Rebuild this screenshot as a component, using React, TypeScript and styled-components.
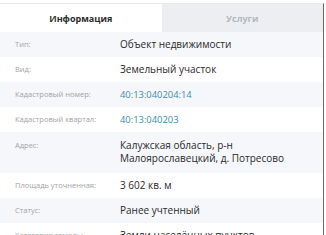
import React from "react";
import styled, { createGlobalStyle } from "styled-components";

const Global = createGlobalStyle`
  html, body { margin: 0; padding: 0; background: #ffffff; }
  body { font-family: "Open Sans", "Noto Sans", sans-serif; }
`;

const Frame = styled.div`
  width: 326px;
  height: 235px;
  overflow: hidden;
  background: #ffffff;
  padding-top: 3px;
  box-sizing: border-box;
`;

const Panel = styled.div`
  width: 324px;
  box-sizing: border-box;
  border-top: 1px solid #e6e8ec;
  border-right: 1px solid #6a6a6a;
`;

const Tabs = styled.div`
  display: flex;
  height: 28px;
`;

const Tab = styled.div<{ $active?: boolean }>`
  flex: 1;
  display: flex;
  align-items: center;
  justify-content: center;
  font-family: "Open Sans", sans-serif;
  font-weight: 700;
  font-size: 9px;
  color: ${(p) => (p.$active ? "#2b2b2b" : "#b4b8c0")};
  background: ${(p) => (p.$active ? "#ffffff" : "#eceef2")};
`;

const Row = styled.div<{ $alt?: boolean; $tall?: boolean }>`
  display: grid;
  grid-template-columns: 105px 1fr;
  align-items: ${(p) => (p.$tall ? "start" : "center")};
  padding: ${(p) => (p.$tall ? "7px 0 8px 15px" : "0 0 0 15px")};
  min-height: 25px;
  box-sizing: border-box;
  background: ${(p) => (p.$alt ? "#f5f7fa" : "#ffffff")};
`;

const Label = styled.div`
  font-size: 7.5px;
  color: #a3a3a3;
  line-height: 13px;
`;

const Value = styled.div<{ $link?: boolean }>`
  font-size: ${(p) => (p.$link ? "9.4px" : "10px")};
  color: ${(p) => (p.$link ? "#3e8ea8" : "#2a2a2a")};
  line-height: 13px;
`;

const rows: { label: string; value: string; link?: boolean; tall?: boolean }[] = [
  { label: "Тип:", value: "Объект недвижимости" },
  { label: "Вид:", value: "Земельный участок" },
  { label: "Кадастровый номер:", value: "40:13:040204:14", link: true },
  { label: "Кадастровый квартал:", value: "40:13:040203", link: true },
  { label: "Адрес:", value: "Калужская область, р-н Малоярославецкий, д. Потресово", tall: true },
  { label: "Площадь уточненная:", value: "3 602 кв. м" },
  { label: "Статус:", value: "Ранее учтенный" },
  { label: "Категория земель:", value: "Земли населённых пунктов" },
];

export default function App() {
  return (
    <>
      <Global />
      <Frame>
        <Panel>
          <Tabs>
            <Tab $active>Информация</Tab>
            <Tab>Услуги</Tab>
          </Tabs>
          {rows.map((r, i) => (
            <Row key={r.label} $alt={i % 2 === 0} $tall={r.tall}>
              <Label>{r.label}</Label>
              <Value $link={r.link}>{r.value}</Value>
            </Row>
          ))}
        </Panel>
      </Frame>
    </>
  );
}
